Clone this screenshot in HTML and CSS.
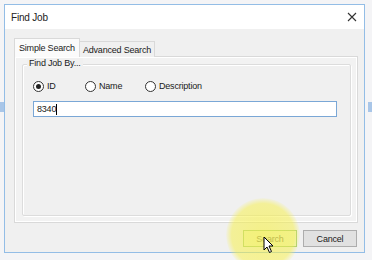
FILE: index.html
```html
<!DOCTYPE html>
<html>

<head>
    <meta content="text/html; charset=utf-8" http-equiv="Content-Type">
    <title>Find Job</title>
    <link rel="stylesheet" href="styles.css">
</head>

<body>
<div class="desk">
    <div class="window">
        <div class="titleBar">
            <span class="title">Find Job</span>
            <svg class="closeIcon" width="10" height="10" viewBox="0 0 10 10">
                <path d="M1 1L9 9M9 1L1 9" stroke="#333" stroke-width="1.1"/>
            </svg>
        </div>
        <div class="content">
            <div class="tabs">
                <div class="tab tabActive">Simple Search</div>
                <div class="tab">Advanced Search</div>
            </div>
            <div class="tabPanel">
                <div class="groupBox">
                    <span class="groupLabel">Find Job By...</span>
                    <div class="radioRow">
                        <label class="radio"><span class="radioDot checked"></span>ID</label>
                        <label class="radio"><span class="radioDot"></span>Name</label>
                        <label class="radio"><span class="radioDot"></span>Description</label>
                    </div>
                    <div class="textBox">8340<span class="caret"></span></div>
                </div>
            </div>
            <div class="buttons">
                <div class="button searchButton">Search</div>
                <div class="button">Cancel</div>
            </div>
        </div>
    </div>
    <div class="highlight"></div>
    <svg class="cursor" width="12" height="18" viewBox="0 0 12 18">
        <path d="M1 1L1 14L4 11L6.5 16.5L8.5 15.5L6 10L10 10Z" fill="#fff" stroke="#000" stroke-width="1"/>
    </svg>
    <div class="sideBar leftBar"></div>
    <div class="sideBar rightBar"></div>
</div>
</body>

</html>
```

FILE: styles.css
```css
body {
    margin: 0;
    font-family: "Liberation Sans", Arial, sans-serif;
    font-size: 9px;
    letter-spacing: -0.2px;
    color: #1a1a1a;
}

.desk {
    position: relative;
    width: 372px;
    height: 260px;
    overflow: hidden;
    background: #f4f4f6;
    padding: 4px 0 0 4px;
    box-sizing: border-box;
}

.window {
    width: 361px;
    height: 249px;
    border: 1px solid #93bde6;
    box-sizing: border-box;
    background: #f0f0f0;
    display: flex;
    flex-direction: column;
}

.titleBar {
    height: 24px;
    background: #ffffff;
    display: flex;
    align-items: center;
    justify-content: space-between;
    padding: 0 6px 0 6px;
    flex-shrink: 0;
}

.title {
    font-size: 10px;
    color: #222;
}

.closeIcon {
    margin-right: 1px;
}

.content {
    flex: 1;
    padding: 9px 6px 0 9px;
    display: flex;
    flex-direction: column;
}

.tabs {
    display: flex;
    align-items: flex-end;
    height: 18px;
    position: relative;
    z-index: 1;
}

.tab {
    height: 15px;
    padding: 0 3px;
    border: 1px solid #d9d9d9;
    border-bottom: none;
    background: #f0f0f0;
    display: flex;
    align-items: center;
    margin-bottom: -1px;
}

.tabActive {
    height: 18px;
    background: #fbfbfb;
    padding: 0 4px;
    margin-right: -1px;
}

.tabPanel {
    height: 167px;
    border: 1px solid #d9d9d9;
    background: #f2f2f2;
    box-shadow: inset 1px 1px 0 #ffffff, inset -1px -1px 0 #ffffff;
    box-sizing: border-box;
    padding: 7px 6px 6px 7px;
    display: flex;
}

.groupBox {
    flex: 1;
    position: relative;
    border: 1px solid #dcdcdc;
    border-radius: 2px;
    background: #f0f0f0;
    box-shadow: inset 1px 1px 0 #ffffff, 1px 1px 0 #ffffff;
    padding: 14px 8px 0 10px;
}

.groupLabel {
    position: absolute;
    top: -7px;
    left: 4px;
    padding: 0 2px;
    background: #f0f0f0;
}

.radioRow {
    display: flex;
    align-items: center;
    height: 14px;
}

.radio {
    display: flex;
    align-items: center;
    gap: 3px;
}

.radio:nth-child(1) {
    width: 52px;
}

.radio:nth-child(2) {
    width: 60px;
}

.radioDot {
    width: 9px;
    height: 9px;
    border: 1px solid #333;
    border-radius: 50%;
    background: #fff;
    position: relative;
}

.radioDot.checked::after {
    content: "";
    position: absolute;
    left: 2px;
    top: 2px;
    width: 5px;
    height: 5px;
    border-radius: 50%;
    background: #222;
}

.textBox {
    margin-top: 8px;
    width: 304px;
    height: 16px;
    border: 1px solid #7aa7d6;
    background: #ffffff;
    box-sizing: border-box;
    display: flex;
    align-items: center;
    padding-left: 3px;
}

.caret {
    width: 1px;
    height: 11px;
    background: #000;
}

.buttons {
    display: flex;
    justify-content: flex-end;
    gap: 6px;
    margin-top: 7px;
    padding-right: 1px;
}

.button {
    width: 54px;
    height: 17px;
    border: 1px solid #adadad;
    background: #e1e1e1;
    box-sizing: border-box;
    display: flex;
    align-items: center;
    justify-content: center;
}

.searchButton {
    border-color: #9fc77a;
    background: #eef3c8;
    color: #6a6a50;
}

.highlight {
    position: absolute;
    left: 226px;
    top: 198px;
    width: 74px;
    height: 74px;
    border-radius: 50%;
    background: radial-gradient(circle, rgba(246, 240, 80, 0.65) 0%, rgba(246, 240, 80, 0.55) 60%, rgba(246, 240, 80, 0) 72%);
}

.cursor {
    position: absolute;
    left: 263px;
    top: 236px;
}

.sideBar {
    position: absolute;
    width: 4px;
    height: 10px;
    background: #a9c6e8;
}

.leftBar {
    left: 0;
    top: 102px;
}

.rightBar {
    right: 0;
    top: 102px;
}
```
